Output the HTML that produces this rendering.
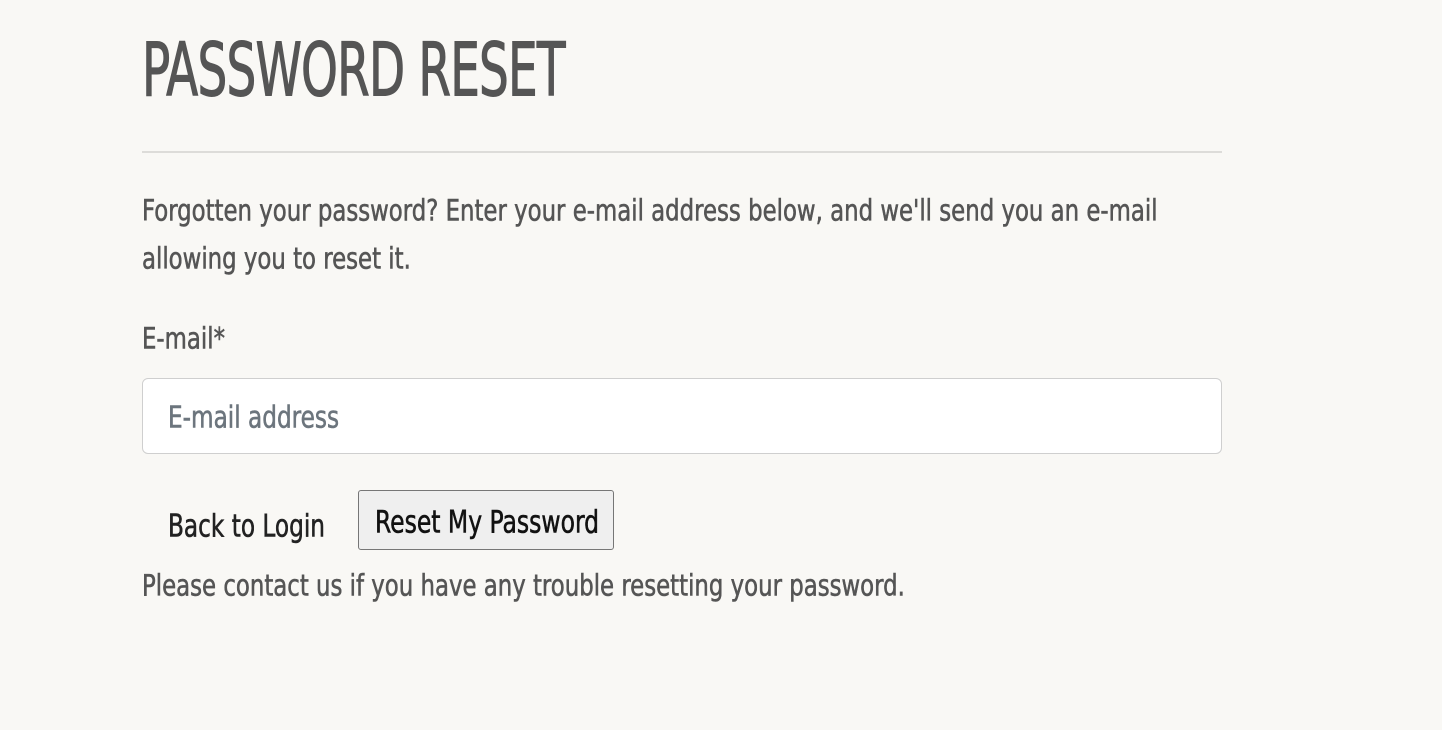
<!DOCTYPE html>
<html><head><meta charset="utf-8">
<style>
html,body{margin:0;padding:0;background:#f9f8f5;width:1442px;height:730px;overflow:hidden}
body{font-family:"Liberation Sans Narrow","DejaVu Sans Condensed","Liberation Sans",sans-serif;color:#555}
.abs{position:absolute;white-space:nowrap;transform-origin:left top;-webkit-text-stroke:0.5px currentColor}
h1{position:absolute;left:142px;top:24px;margin:0;font-weight:normal;font-size:66px;line-height:84px;color:#555;transform:scale(0.79,1.12);transform-origin:left top;letter-spacing:-1px;white-space:nowrap;-webkit-text-stroke:1px #555}
hr{position:absolute;left:142px;top:151px;width:1080px;margin:0;border:0;border-top:2px solid #dddcd9}
.p{font-size:27px;line-height:48px;transform:scale(0.94,1.08)}
.input{position:absolute;left:142px;top:378px;width:1078px;height:74px;border:1px solid #cfcfcf;border-radius:6px;background:#fff}
.btn{position:absolute;left:358px;top:490px;width:256px;height:60px;border:1px solid #767676;border-radius:3px;background:#efefef;box-sizing:border-box}
</style></head><body>
<h1>PASSWORD RESET</h1>
<hr>
<div class="abs p" style="left:142px;top:186px;">Forgotten your password? Enter your e-mail address below, and we'll send you an e-mail</div>
<div class="abs p" style="left:142px;top:234px;">allowing you to reset it.</div>
<div class="abs p" style="left:142px;top:314px;">E-mail*</div>
<div class="input"></div>
<div class="abs" style="left:168px;top:394px;font-size:28px;line-height:44px;color:#6c757d;transform:scale(0.92,1.08)">E-mail address</div>
<div class="abs" style="left:168px;top:500px;font-size:29px;line-height:48px;color:#222;transform:scale(0.89,1.08)">Back to Login</div>
<div class="btn"></div>
<div class="abs" style="left:375px;top:496px;font-size:29px;line-height:48px;color:#111;transform:scale(0.9,1.08)">Reset My Password</div>
<div class="abs p" style="left:142px;top:561px;">Please contact us if you have any trouble resetting your password.</div>
</body></html>
